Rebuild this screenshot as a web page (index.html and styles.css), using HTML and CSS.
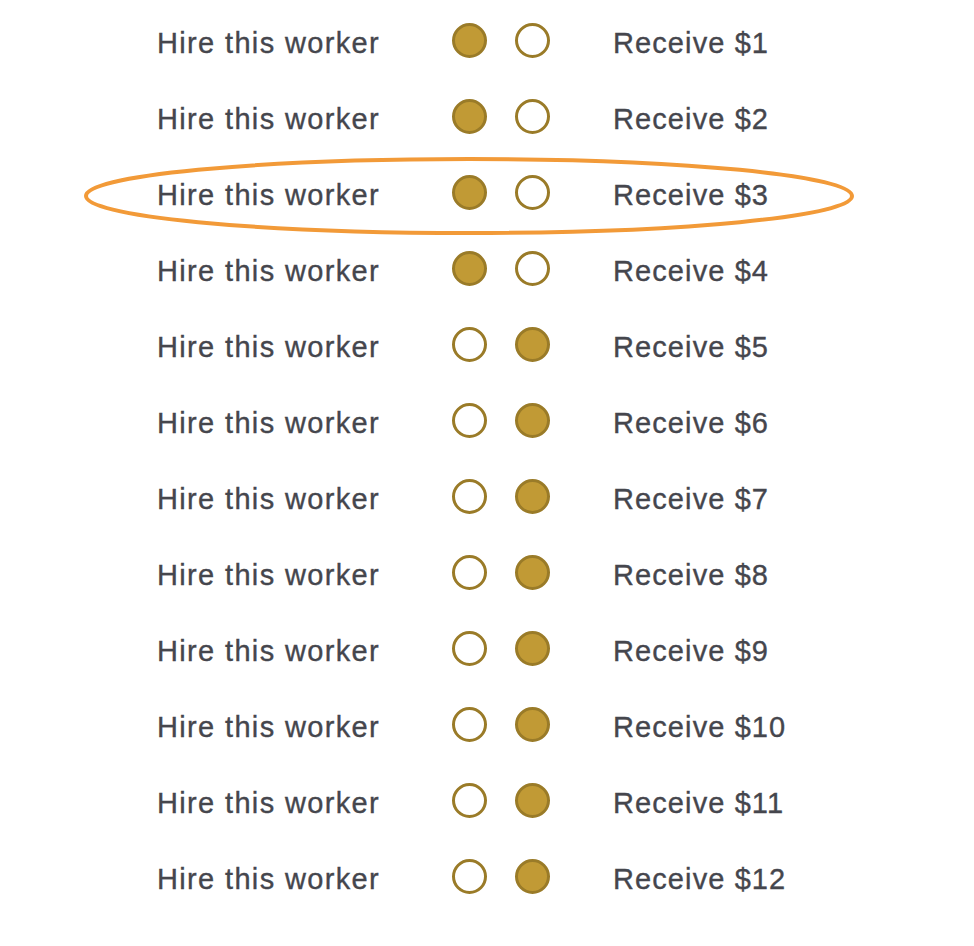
FILE: index.html
```html
<!DOCTYPE html>
<html lang="en">
<head>
<meta charset="utf-8">
<title>Hire choices</title>
<link rel="stylesheet" href="styles.css">
</head>
<body>
<div class="page">
  <div class="list">
    <div class="row"><span class="label">Hire this worker</span><span class="dot on"></span><span class="dot"></span><span class="pay">Receive $1</span></div>
    <div class="row"><span class="label">Hire this worker</span><span class="dot on"></span><span class="dot"></span><span class="pay">Receive $2</span></div>
    <div class="row"><span class="label">Hire this worker</span><span class="dot on"></span><span class="dot"></span><span class="pay">Receive $3</span></div>
    <div class="row"><span class="label">Hire this worker</span><span class="dot on"></span><span class="dot"></span><span class="pay">Receive $4</span></div>
    <div class="row"><span class="label">Hire this worker</span><span class="dot"></span><span class="dot on"></span><span class="pay">Receive $5</span></div>
    <div class="row"><span class="label">Hire this worker</span><span class="dot"></span><span class="dot on"></span><span class="pay">Receive $6</span></div>
    <div class="row"><span class="label">Hire this worker</span><span class="dot"></span><span class="dot on"></span><span class="pay">Receive $7</span></div>
    <div class="row"><span class="label">Hire this worker</span><span class="dot"></span><span class="dot on"></span><span class="pay">Receive $8</span></div>
    <div class="row"><span class="label">Hire this worker</span><span class="dot"></span><span class="dot on"></span><span class="pay">Receive $9</span></div>
    <div class="row"><span class="label">Hire this worker</span><span class="dot"></span><span class="dot on"></span><span class="pay">Receive $10</span></div>
    <div class="row"><span class="label">Hire this worker</span><span class="dot"></span><span class="dot on"></span><span class="pay">Receive $11</span></div>
    <div class="row"><span class="label">Hire this worker</span><span class="dot"></span><span class="dot on"></span><span class="pay">Receive $12</span></div>
  </div>
  <svg class="highlight" width="974" height="946" viewBox="0 0 974 946" aria-hidden="true">
    <ellipse cx="469" cy="196" rx="383" ry="37" fill="none" stroke="#f29a38" stroke-width="4"/>
  </svg>
</div>
</body>
</html>
```

FILE: styles.css
```css
html, body {
  margin: 0;
  padding: 0;
  background: #ffffff;
}

.page {
  position: relative;
  width: 974px;
  height: 946px;
  overflow: hidden;
}

.list {
  display: flex;
  flex-direction: column;
  padding-top: 2px;
}

.row {
  display: flex;
  align-items: center;
  height: 76px;
  padding-left: 157px;
  font-family: "Liberation Sans", Arial, sans-serif;
  font-size: 29px;
  color: #45464d;
  -webkit-text-stroke: 0.35px #45464d;
}

.label {
  width: 295px;
  padding-top: 6px;
  letter-spacing: 1.35px;
  white-space: nowrap;
}

.dot {
  box-sizing: border-box;
  width: 35px;
  height: 35px;
  border-radius: 50%;
  border: 3px solid #9a7b28;
  background: #ffffff;
  flex: none;
}

.dot + .dot {
  margin-left: 28px;
}

.dot.on {
  background: #c19a35;
}

.pay {
  margin-left: 63px;
  padding-top: 6px;
  letter-spacing: 1.1px;
  white-space: nowrap;
}

.highlight {
  position: absolute;
  left: 0;
  top: 0;
  pointer-events: none;
}
```
